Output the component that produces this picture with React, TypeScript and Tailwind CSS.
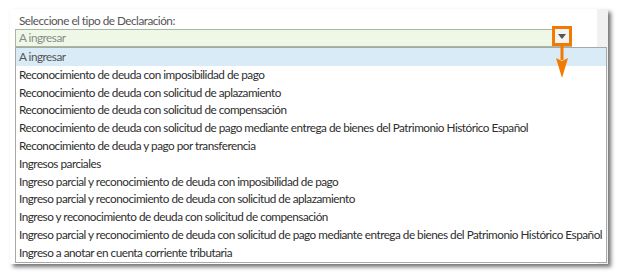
import React from 'react';

const options = [
  'A ingresar',
  'Reconocimiento de deuda con imposibilidad de pago',
  'Reconocimiento de deuda con solicitud de aplazamiento',
  'Reconocimiento de deuda con solicitud de compensación',
  'Reconocimiento de deuda con solicitud de pago mediante entrega de bienes del Patrimonio Histórico Español',
  'Reconocimiento de deuda y pago por transferencia',
  'Ingresos parciales',
  'Ingreso parcial y reconocimiento de deuda con imposibilidad de pago',
  'Ingreso parcial y reconocimiento de deuda con solicitud de aplazamiento',
  'Ingreso y reconocimiento de deuda con solicitud de compensación',
  'Ingreso parcial y reconocimiento de deuda con solicitud de pago mediante entrega de bienes del Patrimonio Histórico Español',
  'Ingreso a anotar en cuenta corriente tributaria',
];

export default function App() {
  return (
    <div
      className="relative w-[620px] h-[276px] bg-white overflow-hidden text-[11.75px] tracking-[-0.5px]"
      style={{ fontFamily: 'Lato, "Noto Sans", sans-serif' }}
    >
      {/* Panel */}
      <div className="ml-[10px] mt-[9px] w-[598px] h-[255px] bg-white flex shadow-[3px_3px_4px_rgba(0,0,0,0.55)]">
        <div className="flex-1 flex flex-col">
          <div className="pl-[9px] pt-[4px] h-[20px] leading-[16px] text-[#555]">
            Seleccione el tipo de Declaración:
          </div>
          <div className="ml-[5px] w-[557px] h-[18px] border border-[#aab6a2] bg-[#eef8e7] leading-[16px] text-[#888] pl-[3px]">
            A ingresar
          </div>
        </div>
        <div className="w-[11px] bg-[#f1f1f1]" />
      </div>

      {/* Open list */}
      <div className="absolute left-[15px] top-[47px] w-[592px] h-[216px] border border-[#a8a8a8] bg-white">
        {options.map((o, i) => (
          <div
            key={o}
            className={`h-[17.8px] pl-[3px] leading-[17.8px] whitespace-nowrap ${
              i === 0 ? 'bg-[#d9ebf7] text-[#555]' : 'text-[#2e2e2e]'
            }`}
          >
            {o}
          </div>
        ))}
      </div>

      {/* Highlight box on the arrow button */}
      <div className="absolute left-[552px] top-[26px] w-[20px] h-[20px] border-[3px] border-[#f27a00] bg-[#f4f4f4] flex items-center justify-center">
        <svg width="8" height="5" viewBox="0 0 8 5">
          <path d="M0 0H8L4 5Z" fill="#555" />
        </svg>
      </div>
      <svg className="absolute left-[555px] top-[46px]" width="14" height="33" viewBox="0 0 14 33">
        <rect x="5.5" y="0" width="3" height="14" fill="#f27a00" />
        <path d="M1 12 L7 15 L13 12 L7 32 Z" fill="#f27a00" />
      </svg>
    </div>
  );
}
